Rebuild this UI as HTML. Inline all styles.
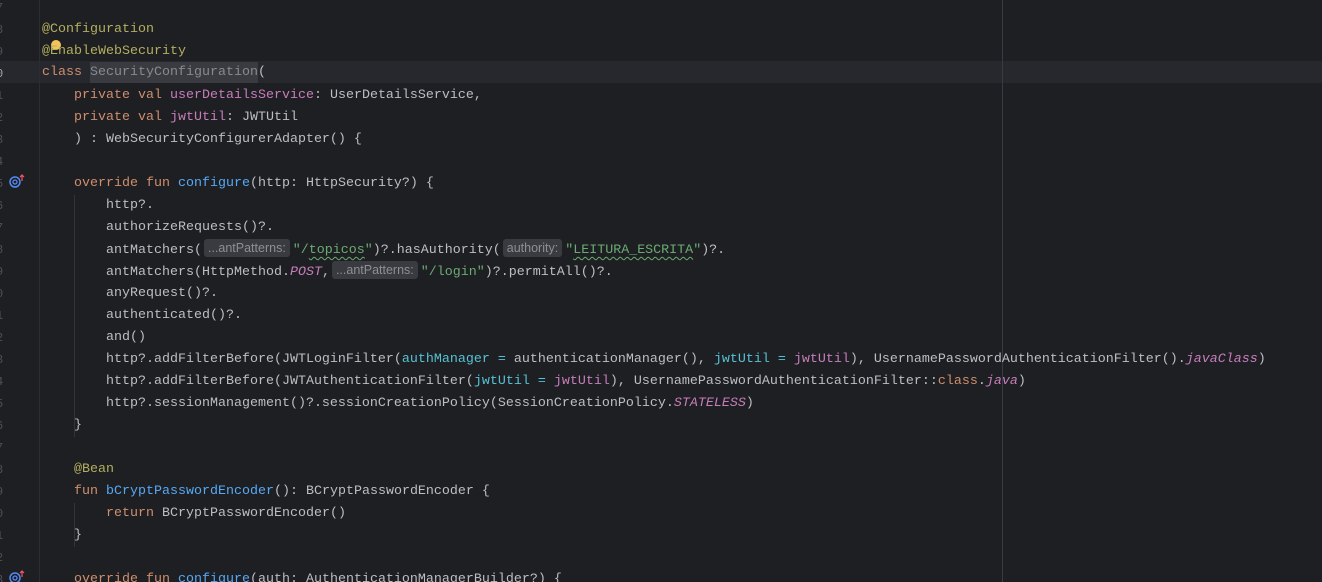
<!DOCTYPE html>
<html><head><meta charset="utf-8"><style>
html,body{margin:0;width:1322px;height:582px;overflow:hidden}
body{background:#1e1f22;position:relative;font-family:"Liberation Mono",monospace;font-size:13.33px;color:#bcbec4}
.l{position:absolute;left:42px;height:22px;line-height:22px;white-space:pre}
.n{position:absolute;left:-4px;width:10px;height:22px;line-height:22px;color:#4b5059;font-size:12px}
.a{color:#b3ae60}.k{color:#cf8e6d}.p{color:#c77dbb}.f{color:#56a8f5}.s{color:#6aab73}.i{color:#c77dbb;font-style:italic}.na{color:#56c1d6}
.h{display:inline-block;background:#393b40;color:#8c8f94;font-family:"Liberation Sans",sans-serif;font-size:12.5px;line-height:18px;height:18px;padding:0 4px;border-radius:3px;margin:0 3px 0 2px;vertical-align:1px}
.u{text-decoration:underline wavy #6aab73;text-underline-offset:3px;text-decoration-thickness:1px}
</style></head><body>
<div style="position:absolute;left:0;top:61px;width:1322px;height:22px;background:#26282e"></div>
<div style="position:absolute;left:39px;top:0;width:1px;height:582px;background:#2b2d30"></div>
<div style="position:absolute;left:1002px;top:0;width:1px;height:582px;background:#393b40"></div>
<div style="position:absolute;left:74px;top:195px;width:1px;height:242px;background:#313438"></div>
<div style="position:absolute;left:74px;top:503px;width:1px;height:44px;background:#313438"></div>
<div style="position:absolute;left:90px;top:62px;width:168px;height:21px;background:#393b40"></div>
<div class="n" style="top:-3px">7</div><div class="n" style="top:19px">8</div><div class="n" style="top:41px">9</div><div class="n" style="top:63px;color:#a1a3ab">0</div>
<div class="n" style="top:85px">1</div><div class="n" style="top:107px">2</div><div class="n" style="top:129px">3</div><div class="n" style="top:151px">4</div><div class="n" style="top:173px">5</div>
<div class="n" style="top:195px">6</div><div class="n" style="top:217px">7</div><div class="n" style="top:239px">8</div><div class="n" style="top:261px">9</div><div class="n" style="top:283px">0</div>
<div class="n" style="top:305px">1</div><div class="n" style="top:327px">2</div><div class="n" style="top:349px">3</div><div class="n" style="top:371px">4</div><div class="n" style="top:393px">5</div>
<div class="n" style="top:415px">6</div><div class="n" style="top:437px">7</div><div class="n" style="top:459px">8</div><div class="n" style="top:481px">9</div><div class="n" style="top:503px">0</div>
<div class="n" style="top:525px">1</div><div class="n" style="top:547px">2</div><div class="n" style="top:569px">3</div>
<svg style="position:absolute;left:9px;top:174px" width="16" height="14"><circle cx="6" cy="8" r="5" fill="none" stroke="#548af7" stroke-width="1.5"/><circle cx="6" cy="8" r="2" fill="none" stroke="#548af7" stroke-width="1.3"/><path d="M13 7V1M11 3l2-2 2 2" stroke="#f75464" stroke-width="1.2" fill="none"/></svg>
<svg style="position:absolute;left:9px;top:570px" width="16" height="14"><circle cx="6" cy="8" r="5" fill="none" stroke="#548af7" stroke-width="1.5"/><circle cx="6" cy="8" r="2" fill="none" stroke="#548af7" stroke-width="1.3"/><path d="M13 7V1M11 3l2-2 2 2" stroke="#f75464" stroke-width="1.2" fill="none"/></svg>
<div style="position:absolute;left:51px;top:40px;width:10px;height:10px;border-radius:5px;background:#f2c55c"></div>
<div class="l a" style="top:19px">@Configuration</div>
<div class="l a" style="top:41px">@EnableWebSecurity</div>
<div class="l" style="top:62px"><span class="k">class </span><span style="color:#868a91">SecurityConfiguration</span>(</div>
<div class="l" style="top:85px">    <span class="k">private val </span><span class="p">userDetailsService</span>: UserDetailsService,</div>
<div class="l" style="top:107px">    <span class="k">private val </span><span class="p">jwtUtil</span>: JWTUtil</div>
<div class="l" style="top:129px">    ) : WebSecurityConfigurerAdapter() {</div>
<div class="l" style="top:173px">    <span class="k">override fun </span><span class="f">configure</span>(http: HttpSecurity?) {</div>
<div class="l" style="top:195px">        http?.</div>
<div class="l" style="top:217px">        authorizeRequests()?.</div>
<div class="l" style="top:239px">        antMatchers(<span class="h">...antPatterns:</span><span class="s">"/<span class="u">topicos</span>"</span>)?.hasAuthority(<span class="h">authority:</span><span class="s">"<span class="u">LEITURA_ESCRITA</span>"</span>)?.</div>
<div class="l" style="top:261px">        antMatchers(HttpMethod.<span class="i">POST</span>,<span class="h">...antPatterns:</span><span class="s">"/login"</span>)?.permitAll()?.</div>
<div class="l" style="top:283px">        anyRequest()?.</div>
<div class="l" style="top:305px">        authenticated()?.</div>
<div class="l" style="top:327px">        and()</div>
<div class="l" style="top:349px">        http?.addFilterBefore(JWTLoginFilter(<span class="na">authManager = </span>authenticationManager(), <span class="na">jwtUtil = </span><span class="p">jwtUtil</span>), UsernamePasswordAuthenticationFilter().<span class="i">javaClass</span>)</div>
<div class="l" style="top:371px">        http?.addFilterBefore(JWTAuthenticationFilter(<span class="na">jwtUtil = </span><span class="p">jwtUtil</span>), UsernamePasswordAuthenticationFilter::<span class="k">class</span>.<span class="i">java</span>)</div>
<div class="l" style="top:393px">        http?.sessionManagement()?.sessionCreationPolicy(SessionCreationPolicy.<span class="i">STATELESS</span>)</div>
<div class="l" style="top:415px">    }</div>
<div class="l a" style="top:459px">    @Bean</div>
<div class="l" style="top:481px">    <span class="k">fun </span><span class="f">bCryptPasswordEncoder</span>(): BCryptPasswordEncoder {</div>
<div class="l" style="top:503px">        <span class="k">return </span>BCryptPasswordEncoder()</div>
<div class="l" style="top:525px">    }</div>
<div class="l" style="top:569px">    <span class="k">override fun </span><span class="f">configure</span>(auth: AuthenticationManagerBuilder?) {</div>
</body></html>
